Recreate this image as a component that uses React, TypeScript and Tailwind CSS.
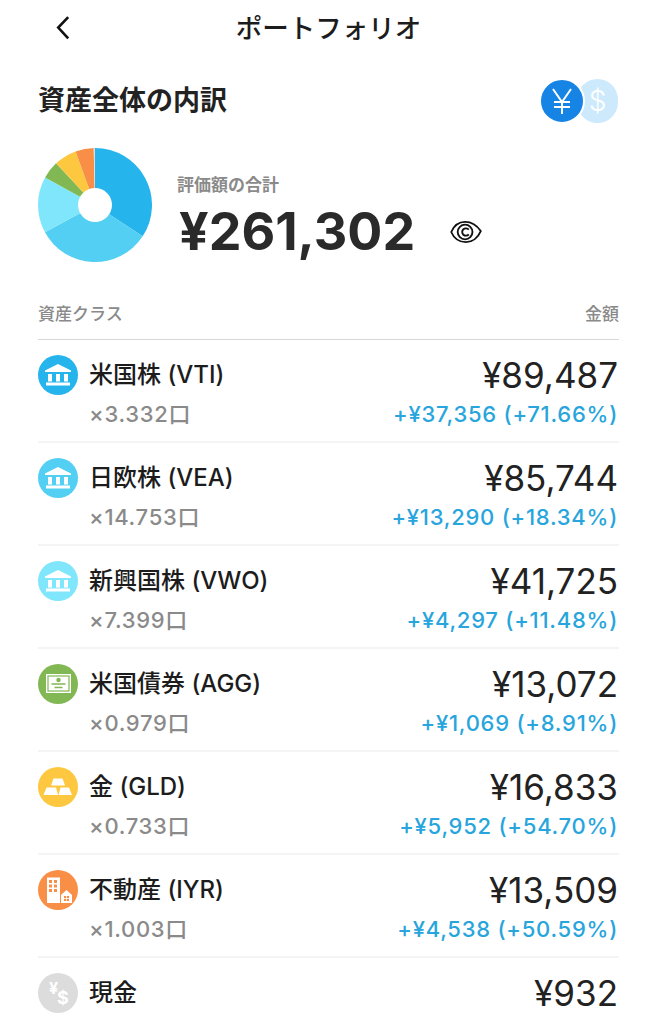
const font = { fontFamily: '"Inter", "Noto Sans CJK JP", sans-serif' };

type Asset = {
  name: string;
  qty: string;
  amount: string;
  gain?: string;
  color: string;
  icon: "bank" | "bill" | "gold" | "estate" | "cash";
};

const assets: Asset[] = [
  { name: "米国株 (VTI)", qty: "×3.332口", amount: "¥89,487", gain: "+¥37,356 (+71.66%)", color: "bg-[#25b4ec]", icon: "bank" },
  { name: "日欧株 (VEA)", qty: "×14.753口", amount: "¥85,744", gain: "+¥13,290 (+18.34%)", color: "bg-[#52cff3]", icon: "bank" },
  { name: "新興国株 (VWO)", qty: "×7.399口", amount: "¥41,725", gain: "+¥4,297 (+11.48%)", color: "bg-[#80e6fb]", icon: "bank" },
  { name: "米国債券 (AGG)", qty: "×0.979口", amount: "¥13,072", gain: "+¥1,069 (+8.91%)", color: "bg-[#82b853]", icon: "bill" },
  { name: "金 (GLD)", qty: "×0.733口", amount: "¥16,833", gain: "+¥5,952 (+54.70%)", color: "bg-[#fdc83f]", icon: "gold" },
  { name: "不動産 (IYR)", qty: "×1.003口", amount: "¥13,509", gain: "+¥4,538 (+50.59%)", color: "bg-[#f98f47]", icon: "estate" },
  { name: "現金", qty: "", amount: "¥932", color: "bg-[#dcdcdc]", icon: "cash" },
];

const slices = [
  { value: 89487, color: "#25b4ec" },
  { value: 85744, color: "#52cff3" },
  { value: 41725, color: "#80e6fb" },
  { value: 13072, color: "#82b853" },
  { value: 16833, color: "#fdc83f" },
  { value: 13509, color: "#f98f47" },
  { value: 932, color: "#dcdcdc" },
];

function Pie() {
  const total = slices.reduce((s, x) => s + x.value, 0);
  let acc = 0;
  return (
    <svg viewBox="-57 -57 114 114" className="h-[114px] w-[114px] shrink-0">
      {slices.map((s) => {
        const a0 = (acc / total) * Math.PI * 2;
        acc += s.value;
        const a1 = (acc / total) * Math.PI * 2;
        const large = a1 - a0 > Math.PI ? 1 : 0;
        const p = (a: number) => `${57 * Math.sin(a)} ${-57 * Math.cos(a)}`;
        return <path key={s.color} d={`M0 0L${p(a0)}A57 57 0 ${large} 1 ${p(a1)}Z`} fill={s.color} />;
      })}
      <circle r="17" fill="#fff" />
    </svg>
  );
}

function AssetIcon({ icon }: { icon: Asset["icon"] }) {
  if (icon === "bank")
    return (
      <svg viewBox="0 0 40 40" className="h-10 w-10" fill="#fff">
        <path d="M20 9L33 15.500V17H7v-1.500z" />
        <rect x="10" y="19" width="4" height="7.500" />
        <rect x="18" y="19" width="4" height="7.500" />
        <rect x="26" y="19" width="4" height="7.500" />
        <rect x="8" y="27.500" width="24" height="3" />
      </svg>
    );
  if (icon === "bill")
    return (
      <svg viewBox="0 0 40 40" className="h-10 w-10" fill="none">
        <rect x="8" y="10" width="25" height="19" fill="#fff" />
        <rect x="10" y="12" width="21" height="15" stroke="#82b853" strokeWidth="1.200" />
        <circle cx="20.500" cy="16" r="2.200" fill="#82b853" />
        <path d="M13.500 20h14M16.500 23.500h8" stroke="#82b853" strokeWidth="1.500" />
      </svg>
    );
  if (icon === "gold")
    return (
      <svg viewBox="0 0 40 40" className="h-10 w-10" fill="#fff">
        <path d="M15.500 11.500h9l2.500 7H13z" />
        <path d="M8.500 20.500h9.500l2 7.500H5.500z" />
        <path d="M22.500 20.500H31l3 7.500H20.500z" />
      </svg>
    );
  if (icon === "estate")
    return (
      <svg viewBox="0 0 40 40" className="h-10 w-10">
        <rect x="9" y="7.500" width="13" height="25.500" fill="#fff" />
        {[10, 14.500, 19].map((y) =>
          [11, 16].map((x) => <rect key={`${x}-${y}`} x={x} y={y} width="3" height="3" fill="#f98f47" />)
        )}
        <path d="M23 25l5.500-5 5.500 5v8H23z" fill="#fff" />
        <rect x="26" y="26" width="5" height="5" fill="#f98f47" />
        <path d="M28.500 26v5M26 28.500h5" stroke="#fff" strokeWidth=".8" />
      </svg>
    );
  return (
    <div className="relative h-10 w-10 font-bold leading-none text-white">
      <span className="absolute left-[11px] top-[7px] text-[16px]">¥</span>
      <span className="absolute left-[19px] top-[16px] text-[18px]">$</span>
    </div>
  );
}

function Row({ a, last }: { a: Asset; last: boolean }) {
  return (
    <div className={`flex h-[103px] justify-between pt-[15px] ${last ? "" : "border-b-2 border-[#f4f4f4]"}`}>
      <div>
        <div className="flex h-10 items-center">
          <div className={`flex h-10 w-10 items-center justify-center rounded-full ${a.color}`}>
            <AssetIcon icon={a.icon} />
          </div>
          <span className="ml-[11px] text-[24px] font-medium leading-[32px] text-[#1c1c1c]">{a.name}</span>
        </div>
        {a.qty && <div className="ml-[51px] mt-[4px] text-[22px] font-[450] leading-[30px] tracking-[0.7px] text-[#8a8a8a]">{a.qty}</div>}
      </div>
      <div className="pr-[1px] text-right">
        <div className="text-[35px] font-normal leading-[40px] text-[#222222]">{a.amount}</div>
        {a.gain && <div className="mt-[4px] text-[22px] font-[450] leading-[30px] tracking-[0.75px] text-[#27a5dc]">{a.gain}</div>}
      </div>
    </div>
  );
}

export default function App() {
  return (
    <div style={font} className="h-[1024px] w-[657px] overflow-hidden bg-white">
      <header className="relative flex h-[57px] items-center justify-center text-[26.500px] font-medium text-[#1c1c1c]">
        <svg viewBox="0 0 20 30" className="absolute left-[53px] top-[15px] h-[26px] w-[20px]" fill="none" stroke="#111" strokeWidth="3">
          <path d="M16 2.500L4.500 14.500 16 27" />
        </svg>
        ポートフォリオ
      </header>

      <div className="px-[38px]">
        <div className="mt-[20px] flex items-center justify-between">
          <h1 className="text-[27px] font-bold leading-[48px] text-[#222222]">資産全体の内訳</h1>
          <div className="flex pr-[1px]">
            <div className="z-10 -my-[1px] flex h-[46px] w-[46px] items-center justify-center rounded-full border-[2px] border-white bg-[#1584e4]">
              <svg viewBox="0 0 24 28" className="h-[28px] w-[24px]" fill="none" stroke="#fff" strokeWidth="2">
                <path d="M3 2l9 13 9-13M12 15v12M4 15h16M4 20h16" />
              </svg>
            </div>
            <div className="-ml-[8px] flex h-[44px] w-[41px] items-center justify-center rounded-full bg-[#cdeafd]">
              <span className="text-[28px] font-light text-white">$</span>
            </div>
          </div>
        </div>

        <div className="mt-[23px] flex items-start">
          <Pie />
          <div className="ml-[25px] pt-[27px]">
            <div className="text-[17px] font-bold leading-[20px] text-[#8a8a8a]">評価額の合計</div>
            <div className="mt-[7px] flex items-center">
              <span className="ml-[2px] text-[52px] font-bold leading-[60px] text-[#2a2a2a]">¥261,302</span>
              <svg viewBox="0 0 36 26" className="ml-[34px] h-[24px] w-[34px]" fill="none" stroke="#111" strokeWidth="2">
                <path d="M2 13C5 6 10 2 17 2c8 0 13 4 17 10-3 7-9 12-16 12S5 20 2 13z" />
                <circle cx="17" cy="13" r="8" />
                <path d="M21 10.500a4 4 0 1 0 0 5" />
              </svg>
            </div>
          </div>
        </div>

        <div className="mt-[29px] flex h-[49px] items-center justify-between border-b border-[#d8d8d8] text-[17px] font-medium text-[#8a8a8a]">
          <span>資産クラス</span>
          <span>金額</span>
        </div>

        {assets.map((a, i) => (
          <Row key={a.name} a={a} last={i === assets.length - 1} />
        ))}
      </div>
    </div>
  );
}
